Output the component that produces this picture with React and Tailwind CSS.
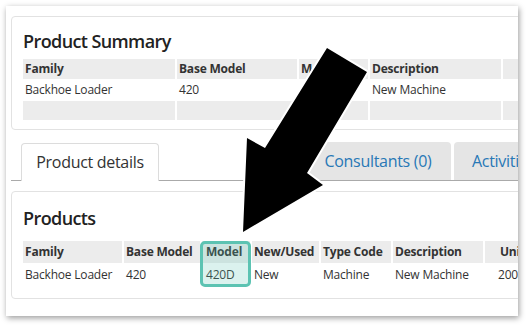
import React from "react";

const font = { fontFamily: '"Open Sans", "Noto Sans", sans-serif' };

function Cell({ w, children, bold, gray, extra = "" }) {
  return (
    <div
      className={`shrink-0 h-full flex items-center border-r-2 border-white pl-[2px] ${bold ? "font-bold" : ""} ${gray ? "bg-[#ececec]" : ""} ${extra}`}
      style={{ width: w }}
    >
      {children}
    </div>
  );
}

export default function App() {
  const sumCols = [154, 122, 71, 133, 120];
  const prodCols = [101, 78, 50, 69, 72, 92, 60];
  return (
    <div className="w-[528px] h-[327px] bg-white overflow-hidden relative pt-[6px] pl-[6px] text-[#333]" style={font}>
      <div className="w-[512px] h-[310px] bg-white overflow-hidden shadow-[1px_2px_6px_rgba(0,0,0,0.4)] pt-[10px] pl-[5px]">
        {/* Product Summary card */}
        <div className="w-[560px] h-[114px] border border-[#e2e2e2] rounded-[4px] pl-[11px]">
          <div className="text-[18px] font-semibold leading-[24px] mt-[12px] tracking-[-0.6px] text-[#222]">Product Summary</div>
          <div className="mt-[6px] text-[12px] tracking-[-0.2px]">
            <div className="flex h-[20px]">
              {["Family", "Base Model", "M", "Description", ""].map((t, i) => (
                <Cell key={i} w={sumCols[i]} bold gray>{t}</Cell>
              ))}
            </div>
            <div className="flex h-[22px]">
              {["Backhoe Loader", "420", "", "New Machine", ""].map((t, i) => (
                <Cell key={i} w={sumCols[i]}>{t}</Cell>
              ))}
            </div>
            <div className="flex h-[19px]">
              {["", "", "", "", ""].map((t, i) => (
                <Cell key={i} w={sumCols[i]} gray>{t}</Cell>
              ))}
            </div>
          </div>
        </div>

        {/* Tabs */}
        <div className="mt-[12px] h-[39px] w-[560px] flex items-end border-b border-[#aaaaaa] pl-[10px] text-[16px] tracking-[-0.3px]">
          <div className="h-[38px] w-[138px] -mb-px bg-white border border-b-0 border-[#dcdcdc] rounded-t-[4px] flex items-center justify-center text-[#333] pb-[1px]">
            Product details
          </div>
          <div className="w-[146px] shrink-0" />
          <div className="h-[38px] w-[146px] bg-[#e5e5e5] rounded-t-[4px] flex items-center justify-center text-[#2878b6] pb-[1px]">
            Consultants (0)
          </div>
          <div className="w-[3px] shrink-0" />
          <div className="h-[38px] w-[110px] bg-[#e5e5e5] rounded-t-[4px] flex items-center pl-[18px] text-[#2878b6] pb-[1px]">
            Activities
          </div>
        </div>

        {/* Products card */}
        <div className="mt-[10px] w-[560px] h-[108px] border border-[#e2e2e2] rounded-[4px] pl-[11px]">
          <div className="text-[18px] font-semibold leading-[24px] mt-[14px] tracking-[-0.6px] text-[#222]">Products</div>
          <div className="relative mt-[11px] text-[12px] tracking-[-0.2px]">
            <div className="flex h-[22px]">
              {["Family", "Base Model", "Model", "New/Used", "Type Code", "Description", "Unit"].map((t, i) => (
                <Cell key={i} w={prodCols[i]} bold gray extra={i === 6 ? "pl-[15px]" : i === 2 ? "pl-[4px]" : ""}>{t}</Cell>
              ))}
            </div>
            <div className="flex h-[24px]">
              {["Backhoe Loader", "420", "420D", "New", "Machine", "New Machine", "2008"].map((t, i) => (
                <Cell key={i} w={prodCols[i]} extra={i === 6 ? "pl-[13px]" : i === 2 ? "pl-[4px]" : ""}>{t}</Cell>
              ))}
            </div>
            <div className="absolute left-[177px] top-0 w-[51px] h-[46px] rounded-[5px] border-[3px] border-[#5cc3b2] bg-[rgba(92,195,178,0.22)]" />
          </div>
        </div>
      </div>

      {/* Arrow annotation */}
      <svg className="absolute left-0 top-0" width="528" height="327" viewBox="0 0 528 327">
        <polygon
          points="327,48 367,72 307,173 323,185 243,232 247,138 265,148"
          fill="#000"
          stroke="#fff"
          strokeWidth="4"
          strokeLinejoin="miter"
          paintOrder="stroke"
        />
      </svg>
    </div>
  );
}
